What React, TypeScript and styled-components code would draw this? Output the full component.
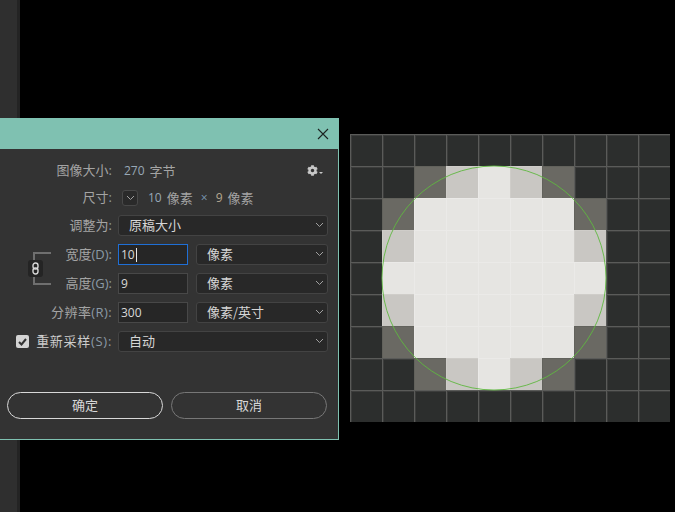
import styled, { createGlobalStyle } from "styled-components";
import { FaCog } from "react-icons/fa";

const GlobalStyle = createGlobalStyle`
    html, body {
        margin: 0;
        padding: 0;
        background: #000;
    }
    body {
        font-family: "Noto Sans CJK SC", "Noto Sans", sans-serif;
    }
`;

type CellKind = "d" | "m" | "l" | "w";

const ROW_EDGE: CellKind[] = "dddddddddd".split("") as CellKind[];
const ROW_1: CellKind[] = "ddmlwlmddd".split("") as CellKind[];
const ROW_2: CellKind[] = "dmwwwwwmdd".split("") as CellKind[];
const ROW_3: CellKind[] = "dlwwwwwldd".split("") as CellKind[];
const ROW_4: CellKind[] = "dwwwwwwwdd".split("") as CellKind[];

const PIXELS = [ROW_EDGE, ROW_1, ROW_2, ROW_3, ROW_4, ROW_3, ROW_2, ROW_1, ROW_EDGE];

const Chevron = () => (
    <ChevronIcon viewBox="0 0 9 6" fill="none" stroke="currentColor" strokeWidth={1}>
        <path d="M1 1l3.5 3.5L8 1" />
    </ChevronIcon>
);

const Select = ({ label }: { label: string }) => (
    <SelectBox>
        <span>{label}</span>
        <Chevron />
    </SelectBox>
);

const App = () => {
    return (
        <Stage>
            <GlobalStyle />
            <SideStrip />
            <Dialog>
                <TitleBar>
                    <CloseIcon viewBox="0 0 12 12" fill="none" stroke="currentColor" strokeWidth={1.1}>
                        <path d="M1 1l10 10M11 1L1 11" />
                    </CloseIcon>
                </TitleBar>
                <Form>
                    <Row $height={28}>
                        <Label>
                            图像大小<Latin>:</Latin>
                        </Label>
                        <Info>
                            <Num>270</Num>
                            <span>字节</span>
                            <GearWrap>
                                <FaCog size={11} />
                                <GearCaret />
                            </GearWrap>
                        </Info>
                    </Row>
                    <Row $height={26}>
                        <Label>
                            尺寸<Latin>:</Latin>
                        </Label>
                        <Info>
                            <ToggleBox>
                                <Chevron />
                            </ToggleBox>
                            <Num>10</Num>
                            <span>像素</span>
                            <Times>×</Times>
                            <Tan>9</Tan>
                            <span>像素</span>
                        </Info>
                    </Row>
                    <Row>
                        <Label>
                            调整为<Latin>:</Latin>
                        </Label>
                        <Select label="原稿大小" />
                    </Row>
                    <LinkedGroup>
                        <LinkBracket>
                            <LinkBox>
                                <svg width="7" height="13" viewBox="0 0 7 13" fill="none" stroke="#d8d8d8" strokeWidth={1.4}>
                                    <rect x="1" y="1" width="5" height="6" rx="2.4" />
                                    <rect x="1" y="6" width="5" height="6" rx="2.4" />
                                </svg>
                            </LinkBox>
                        </LinkBracket>
                        <Row>
                            <Label>
                                宽度<Latin>(D):</Latin>
                            </Label>
                            <Pair>
                                <NumberInput $focused>
                                    10<Caret />
                                </NumberInput>
                                <Select label="像素" />
                            </Pair>
                        </Row>
                        <Row>
                            <Label>
                                高度<Latin>(G):</Latin>
                            </Label>
                            <Pair>
                                <NumberInput>9</NumberInput>
                                <Select label="像素" />
                            </Pair>
                        </Row>
                    </LinkedGroup>
                    <Row>
                        <Label $spaced>
                            分辨率<Latin>(R):</Latin>
                        </Label>
                        <Pair>
                            <NumberInput>300</NumberInput>
                            <Select label="像素/英寸" />
                        </Pair>
                    </Row>
                    <Row>
                        <CheckLabel>
                            <CheckBox>
                                <svg width="9" height="8" viewBox="0 0 9 8" fill="none" stroke="#333" strokeWidth={2}>
                                    <path d="M1 4l2.5 2.5L8 1" />
                                </svg>
                            </CheckBox>
                            <CheckText>
                                重新采样<Latin>(S):</Latin>
                            </CheckText>
                        </CheckLabel>
                        <Select label="自动" />
                    </Row>
                </Form>
                <Buttons>
                    <Button $primary>确定</Button>
                    <Button>取消</Button>
                </Buttons>
            </Dialog>
            <Canvas>
                {PIXELS.map((row, y) =>
                    row.map((kind, x) => <Cell key={`${x}-${y}`} $kind={kind} />)
                )}
                <CircleOverlay viewBox="0 0 320 288" fill="none" stroke="#5fb83f" strokeWidth={0.9}>
                    <circle cx="144" cy="144" r="112" />
                </CircleOverlay>
            </Canvas>
        </Stage>
    );
};

export default App;

const CELL_COLORS: Record<CellKind, string> = {
    d: "#2c2e2d",
    m: "#6a6963",
    l: "#c9c7c3",
    w: "#e6e5e2",
};

const LINE_COLORS: Record<CellKind, string> = {
    d: "#5a5b59",
    m: "#62625c",
    l: "#cfcdc9",
    w: "#ebeae8",
};

const Stage = styled.div`
    position: relative;
    display: flex;
    align-items: flex-start;
    gap: 11px;
    width: 675px;
    height: 512px;
    overflow: hidden;
    background: #000;
`;

const SideStrip = styled.div`
    position: absolute;
    left: 0;
    top: 0;
    bottom: 0;
    width: 17px;
    background: #2f2f2f;
    border-right: 3px solid #242424;
`;

const Dialog = styled.div`
    position: relative;
    box-sizing: border-box;
    width: 339px;
    height: 322px;
    margin-top: 118px;
    background: #333;
    border-right: 1px solid #7fc1b1;
    border-bottom: 1px solid #7fc1b1;
`;

const TitleBar = styled.div`
    display: flex;
    align-items: center;
    justify-content: flex-end;
    height: 31px;
    padding-right: 9px;
    background: #7fc1b1;
`;

const CloseIcon = styled.svg`
    width: 12px;
    height: 12px;
    color: #1c2422;
`;

const Form = styled.div`
    display: flex;
    flex-direction: column;
    padding: 8px 10px 0 0;
`;

const Row = styled.div<{ $height?: number }>`
    display: grid;
    grid-template-columns: 112px 210px;
    column-gap: 6px;
    align-items: center;
    height: ${(p) => p.$height ?? 29}px;
`;

const Label = styled.div<{ $spaced?: boolean }>`
    padding-bottom: 2px;
    font-size: 13px;
    line-height: 18px;
    letter-spacing: ${(p) => (p.$spaced ? "0.4px" : "0")};
    color: #a4a4a4;
    text-align: right;
    white-space: nowrap;
`;

const Latin = styled.span`
    font-family: "Open Sans", sans-serif;
    color: #8b9aa6;
`;

const Info = styled.div`
    display: flex;
    align-items: center;
    gap: 5px;
    padding: 0 0 2px 6px;
    font-size: 13px;
    color: #a4a4a4;
`;

const Num = styled.span`
    font-family: "Open Sans", sans-serif;
    font-size: 12px;
    color: #98a8b6;
`;

const Tan = styled(Num)`
    color: #b5a78f;
`;

const Times = styled(Num)`
    margin: 0 3px;
    color: #7d9ab3;
`;

const GearWrap = styled.div`
    display: flex;
    align-items: center;
    gap: 1px;
    margin-left: auto;
    margin-right: 5px;
    color: #c8c8c8;
`;

const GearCaret = styled.i`
    align-self: flex-end;
    margin-bottom: 2px;
    border-left: 2px solid transparent;
    border-right: 2px solid transparent;
    border-top: 2px solid #c8c8c8;
`;

const ToggleBox = styled.div`
    display: flex;
    align-items: center;
    justify-content: center;
    box-sizing: border-box;
    width: 16px;
    height: 16px;
    margin: 2px 5px 0 -2px;
    background: #2a2a2a;
    border: 1px solid #484848;
    border-radius: 3px;
    color: #a8a8a8;
`;

const ChevronIcon = styled.svg`
    flex: none;
    width: 9px;
    height: 6px;
    color: #a0a0a0;
`;

const SelectBox = styled.div`
    display: flex;
    align-items: center;
    justify-content: space-between;
    box-sizing: border-box;
    height: 21px;
    padding: 0 3px 2px 10px;
    background: #282828;
    border: 1px solid #434343;
    border-radius: 3px;
    font-size: 13px;
    color: #d6d6d6;
    white-space: nowrap;
`;

const Pair = styled.div`
    display: grid;
    grid-template-columns: 70px 132px;
    column-gap: 8px;
`;

const NumberInput = styled.div<{ $focused?: boolean }>`
    display: flex;
    align-items: center;
    box-sizing: border-box;
    height: 21px;
    padding-left: 2px;
    background: #262626;
    border: 1px solid ${(p) => (p.$focused ? "#1f6fd6" : "#484848")};
    font-family: "Open Sans", sans-serif;
    font-size: 12px;
    color: #d8d8d8;
`;

const Caret = styled.i`
    width: 1px;
    height: 14px;
    margin-left: 1px;
    background: #e8e8e8;
`;

const LinkedGroup = styled.div`
    position: relative;
`;

const LinkBracket = styled.div`
    position: absolute;
    left: 33px;
    top: 12px;
    box-sizing: border-box;
    width: 18px;
    height: 33px;
    border: 2px solid #6f6f6f;
    border-right: none;
`;

const LinkBox = styled.div`
    position: absolute;
    left: -7px;
    top: 6px;
    display: flex;
    align-items: center;
    justify-content: center;
    width: 15px;
    height: 17px;
    background: #242424;
    border-radius: 3px;
`;

const CheckLabel = styled.label`
    display: flex;
    align-items: center;
    justify-content: space-between;
    padding-left: 16px;
    font-size: 13px;
    line-height: 18px;
    color: #cdcdcd;
    white-space: nowrap;
`;

const CheckText = styled.span`
    padding-bottom: 2px;
    letter-spacing: 0.7px;
`;

const CheckBox = styled.span`
    display: flex;
    align-items: center;
    justify-content: center;
    width: 13px;
    height: 13px;
    background: #d4d4d4;
    border-radius: 2px;
`;

const Buttons = styled.div`
    display: grid;
    grid-template-columns: 156px 156px;
    column-gap: 8px;
    padding: 36px 0 0 7px;
`;

const Button = styled.div<{ $primary?: boolean }>`
    display: flex;
    align-items: center;
    justify-content: center;
    box-sizing: border-box;
    height: 27px;
    padding-bottom: 2px;
    border: 1px solid ${(p) => (p.$primary ? "#d8d8d8" : "#777")};
    border-radius: 14px;
    font-size: 13px;
    color: #d8d8d8;
`;

const Canvas = styled.div`
    position: relative;
    display: grid;
    grid-template-columns: repeat(10, 32px);
    grid-auto-rows: 32px;
    margin-top: 134px;
    box-shadow: inset -1px -1px 0 #5a5b59;
`;

const Cell = styled.div<{ $kind: CellKind }>`
    box-sizing: border-box;
    background: ${(p) => CELL_COLORS[p.$kind]};
    border-left: 1px solid ${(p) => LINE_COLORS[p.$kind]};
    border-top: 1px solid ${(p) => LINE_COLORS[p.$kind]};
    box-shadow: ${(p) => (p.$kind === "d" ? "inset 1px 1px 0 #3c3d3c" : "none")};
`;

const CircleOverlay = styled.svg`
    position: absolute;
    left: 0;
    top: 0;
    width: 320px;
    height: 288px;
`;
